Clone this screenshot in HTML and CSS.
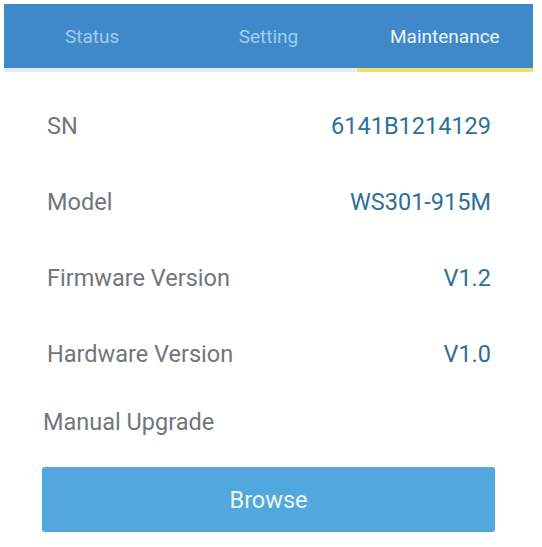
FILE: index.html
```html
<!DOCTYPE html>
<html>
<head>
<meta charset="utf-8">
<link rel="stylesheet" href="styles.css">
</head>
<body>
<div class="page">
  <div class="tabs">
    <div class="tab">Status</div>
    <div class="tab">Setting</div>
    <div class="tab active">Maintenance</div>
  </div>
  <div class="content">
    <div class="row"><span class="label">SN</span><span class="value">6141B1214129</span></div>
    <div class="row"><span class="label">Model</span><span class="value">WS301-915M</span></div>
    <div class="row"><span class="label">Firmware Version</span><span class="value">V1.2</span></div>
    <div class="row"><span class="label">Hardware Version</span><span class="value">V1.0</span></div>
    <div class="upgrade">Manual Upgrade</div>
    <div class="btn">Browse</div>
  </div>
</div>
</body>
</html>
```

FILE: styles.css
```css
html, body {
  margin: 0;
  padding: 0;
  background: #ffffff;
  font-family: Roboto, "Liberation Sans", sans-serif;
}
.page {
  padding: 4px 9px 0 4px;
}
.tabs {
  display: flex;
  background: #3f89c9;
  height: 68px;
}
.tab {
  flex: 1;
  display: flex;
  align-items: center;
  justify-content: center;
  font-size: 19px;
  color: #9fcdf0;
  border-bottom: 4px solid #e1eef9;
  padding-top: 1px;
}
.tab.active {
  color: #eaf4fc;
  border-bottom-color: #f3de6a;
}
.content {
  padding: 16px 42px 0 39px;
}
.row {
  height: 76px;
  display: flex;
  align-items: center;
  justify-content: space-between;
  padding-left: 4px;
}
.label {
  font-size: 23.5px;
  color: #70767b;
}
.value {
  font-size: 23.5px;
  color: #2f6f98;
}
.upgrade {
  margin-top: 17px;
  font-size: 23.5px;
  line-height: 26px;
  color: #70767b;
}
.btn {
  margin-top: 32px;
  margin-left: -1px;
  width: 453px;
  height: 65px;
  background: #52a8dd;
  border-radius: 3px;
  color: #e9f4fc;
  font-size: 23.5px;
  display: flex;
  align-items: center;
  justify-content: center;
  box-shadow: 0 1px 2px rgba(0,0,0,0.08);
}
```
